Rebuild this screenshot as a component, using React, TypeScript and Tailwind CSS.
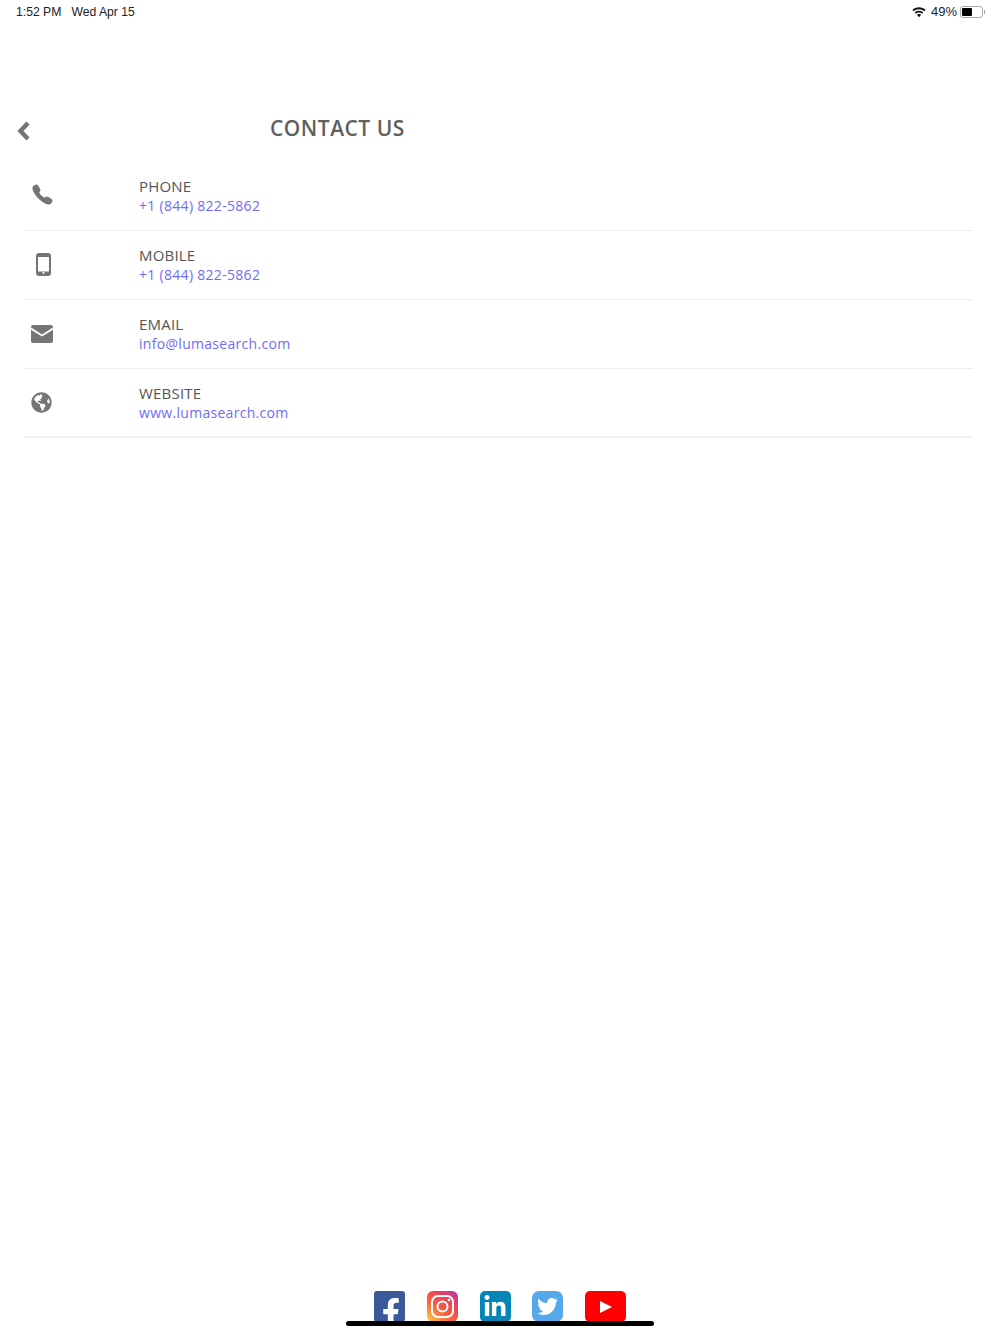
import React from "react";
import { FaFacebookF, FaLinkedinIn, FaTwitter, FaGlobeAmericas } from "react-icons/fa";
import { IoCall } from "react-icons/io5";

function Row({ icon, label, value, last }: { icon: React.ReactNode; label: string; value: string; last?: boolean }) {
  return (
    <div className={`flex h-[69.2px] items-center ${last ? "border-b-2 border-[#f2f2f2]" : "border-b border-[#eeeeee]"}`}>
      <div className="flex w-[115px] shrink-0 items-center pl-[6px] text-[#757575]">{icon}</div>
      <div className="flex flex-col">
        <span className="text-[15px] leading-[19px] tracking-[0.2px] text-[#555555]">{label}</span>
        <span className="text-[14px] leading-[19px] tracking-[0.3px] text-[#6f6cf8]">{value}</span>
      </div>
    </div>
  );
}

function Mobile() {
  return (
    <svg width="15" height="23" viewBox="0 0 15 23" className="ml-[6px]">
      <rect x="1" y="1" width="13" height="21" rx="2" fill="none" stroke="#757575" strokeWidth="2" />
      <rect x="1.500" y="1.500" width="12" height="2.500" fill="#757575" />
      <rect x="1.500" y="18.500" width="12" height="3" fill="#757575" />
      <circle cx="7.500" cy="19.800" r="1.100" fill="#fff" />
    </svg>
  );
}

function Mail() {
  return (
    <svg width="22" height="18" viewBox="0 0 22 18" className="ml-[1px]">
      <path d="M2 0h18c1.100 0 2 .9 2 2v.6L11 9.400 0 2.600V2C0 .9.900 0 2 0z" fill="#757575" />
      <path d="M0 4.800l11 6.800 11-6.800V16c0 1.100-.9 2-2 2H2c-1.100 0-2-.9-2-2z" fill="#757575" />
    </svg>
  );
}

function Instagram() {
  return (
    <svg width="31" height="31" viewBox="0 0 31 31" className="shrink-0">
      <defs>
        <linearGradient id="ig" x1="0.1" y1="1" x2="0.9" y2="0">
          <stop offset="0" stopColor="#fdc43f" />
          <stop offset="0.4" stopColor="#f9603d" />
          <stop offset="0.75" stopColor="#e8405f" />
          <stop offset="1" stopColor="#b93ba8" />
        </linearGradient>
      </defs>
      <rect width="31" height="31" rx="6" fill="url(#ig)" />
      <rect x="5" y="5" width="21" height="21" rx="6" fill="none" stroke="#fff" strokeWidth="2" />
      <circle cx="15.500" cy="15.500" r="5" fill="none" stroke="#fff" strokeWidth="2" />
      <circle cx="22" cy="9" r="1.300" fill="#fff" />
    </svg>
  );
}

export default function App() {
  return (
    <div className="relative flex h-[1334px] w-[1000px] flex-col overflow-hidden bg-white font-['Open_Sans',sans-serif]">
      <div className="flex h-[24px] items-center justify-between pl-[16px] pr-[15px] font-['Liberation_Sans',sans-serif] text-[12.2px] text-[#222222]">
        <div className="flex gap-[10px]">
          <span>1:52 PM</span>
          <span>Wed Apr 15</span>
        </div>
        <div className="flex items-center">
          <svg width="14" height="11" viewBox="0 0 15 11" className="mr-[5px]">
            <path d="M7.500 0C4.800 0 2.300 1 .5 2.800l1.300 1.400C3.300 2.700 5.300 1.900 7.500 1.900s4.200.8 5.700 2.300l1.300-1.400C12.700 1 10.200 0 7.500 0z" fill="#111" />
            <path d="M7.500 3.600c-1.800 0-3.400.7-4.600 1.900l1.300 1.300c.9-.8 2-1.300 3.300-1.300s2.400.5 3.300 1.300l1.300-1.300C10.900 4.300 9.300 3.600 7.500 3.600z" fill="#111" />
            <path d="M7.500 7c-.9 0-1.700.4-2.300 1l2.300 2.600L9.800 8c-.6-.6-1.400-1-2.300-1z" fill="#111" />
          </svg>
          <span className="text-[13px]">49%</span>
          <div className="ml-[3px] flex items-center">
            <div className="h-[12px] w-[23px] rounded-[3px] border border-[#aaaaaa] p-[1px]">
              <div className="h-full w-[10px] rounded-[1px] bg-black" />
            </div>
            <div className="ml-[1px] h-[4px] w-[1px] bg-[#aaaaaa]" />
          </div>
        </div>
      </div>

      <div className="relative flex h-[113px] items-end pl-[270px]">
        <svg width="14" height="20" viewBox="0 0 14 20" className="absolute left-[16px] top-[97px]">
          <path d="M12 2L4.500 10 12 18" fill="none" stroke="#757575" strokeWidth="4.500" />
        </svg>
        <h1 className="mb-[-5px] text-[21px] font-semibold leading-[28px] tracking-[0.5px] text-[#5f5f5f]">CONTACT US</h1>
      </div>

      <div className="mx-[24px] mt-[24.6px] flex w-[949px] flex-col">
        <Row label="PHONE" value="+1 (844) 822-5862" icon={<IoCall size={23} className="mb-[3px] ml-[1px]" />} />
        <Row label="MOBILE" value="+1 (844) 822-5862" icon={<Mobile />} />
        <Row label="EMAIL" value="info@lumasearch.com" icon={<Mail />} />
        <Row label="WEBSITE" value="www.lumasearch.com" icon={<FaGlobeAmericas size={21} className="mb-[1px] ml-[1px]" />} last />
      </div>

      <div className="mt-auto flex h-[43px] items-start justify-center gap-[22px] pr-[1px]">
        <div className="flex h-[31px] w-[31px] items-end justify-center overflow-hidden rounded-[3px] bg-[#3b5998]">
          <FaFacebookF size={29} className="mb-[-5px] ml-[3px] text-white" />
        </div>
        <Instagram />
        <div className="flex h-[31px] w-[31px] items-center justify-center rounded-[5px] bg-[#0585b5]">
          <FaLinkedinIn size={24} className="text-white" />
        </div>
        <div className="ml-[-1px] flex h-[31px] w-[31px] items-center justify-center rounded-[7px] bg-[#55a9ea]">
          <FaTwitter size={21} className="text-white" />
        </div>
        <div className="flex h-[31px] w-[41px] items-center justify-center rounded-[5px] bg-[#ff0000]">
          <svg width="12" height="12" viewBox="0 0 12 12" className="ml-[1px]"><path d="M0 0l12 6-12 6z" fill="#fff" /></svg>
        </div>
      </div>

      <div className="absolute left-[346px] top-[1321px] h-[5px] w-[308px] rounded-full bg-black" />
    </div>
  );
}
